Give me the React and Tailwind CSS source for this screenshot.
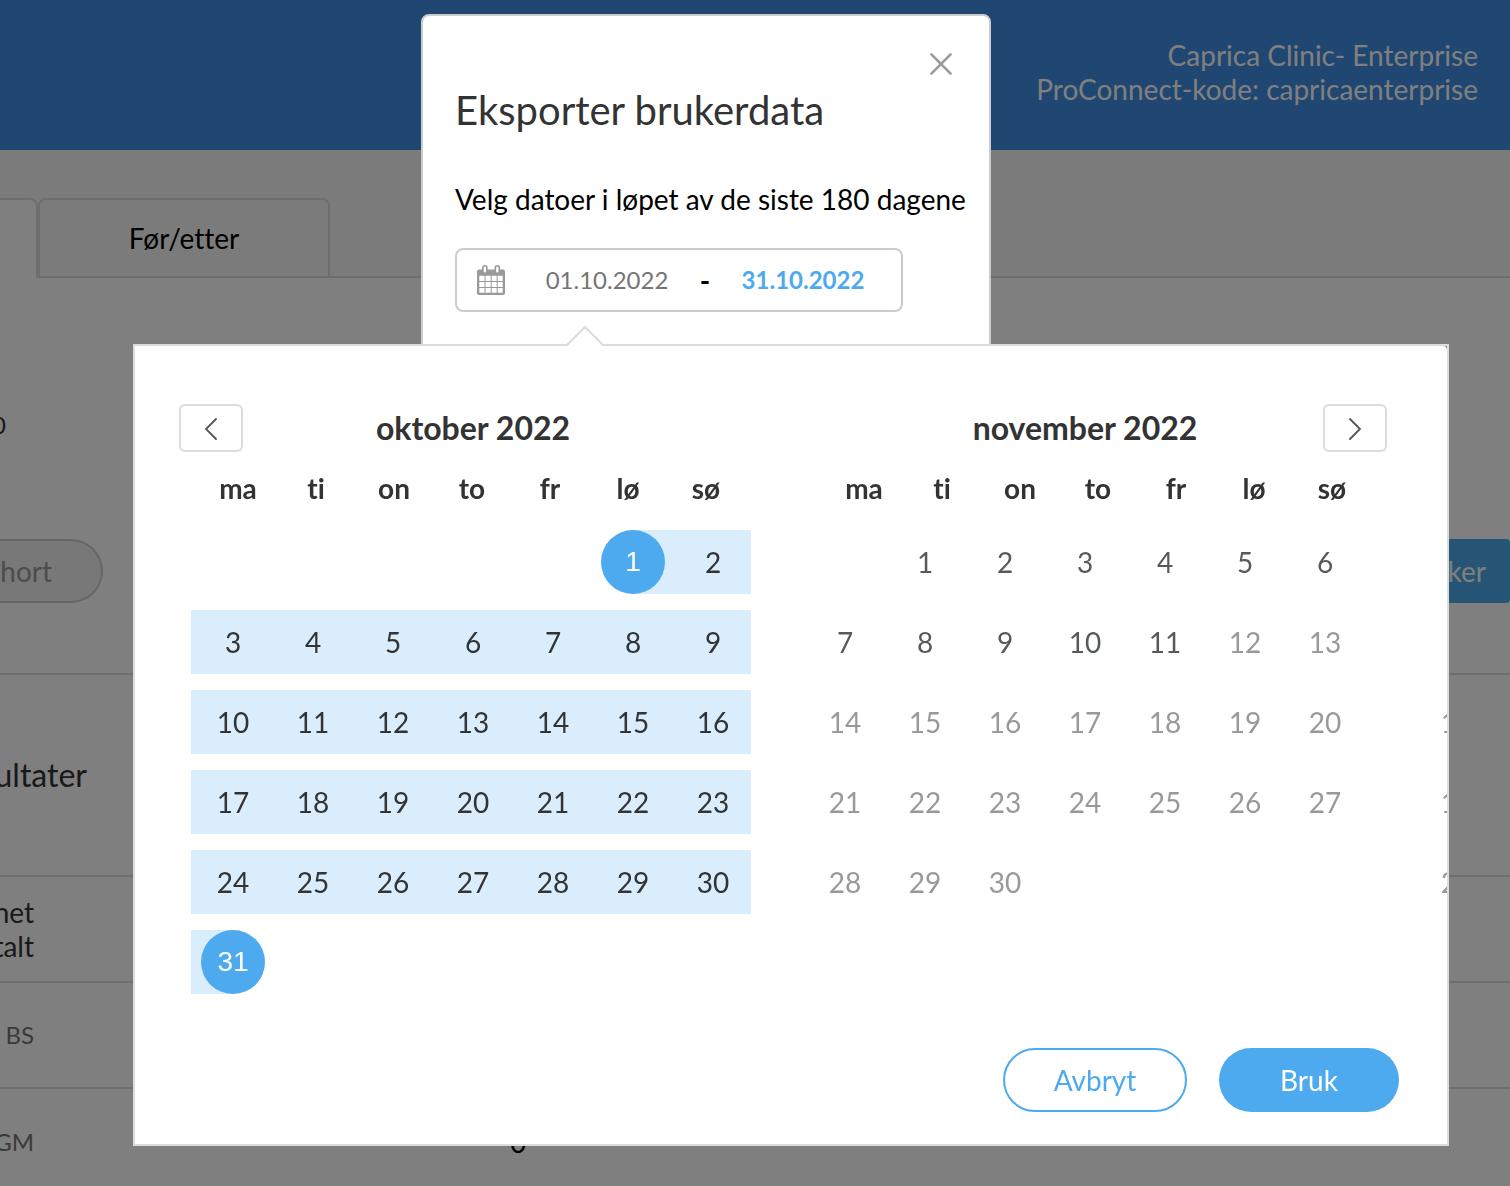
import { useState } from 'react';

const WEEKDAYS = ['ma', 'ti', 'on', 'to', 'fr', 'lø', 'sø'];

const MONTHS = [
  { id: 'oct', title: 'oktober 2022', offset: 5, days: 31, selected: true },
  { id: 'nov', title: 'november 2022', offset: 1, days: 30, lastAvailable: 11 },
];

const ROWS = [
  { name: 'BS', value: '' },
  { name: 'GM', value: '0' },
];

function getWeeks(offset, days) {
  const cells = [
    ...Array(offset).fill(null),
    ...Array.from({ length: days }, (_, i) => i + 1),
  ];
  while (cells.length % 7) cells.push(null);
  const weeks = [];
  for (let i = 0; i < cells.length; i += 7) weeks.push(cells.slice(i, i + 7));
  return weeks;
}

function CloseIcon() {
  return (
    <svg width="24" height="24" viewBox="0 0 24 24" fill="none" stroke="#999" strokeWidth="2.6" strokeLinecap="round">
      <path d="M2.4 2.4 21.6 21.6M21.6 2.4 2.4 21.6" />
    </svg>
  );
}

function CalendarIcon() {
  return (
    <svg width="28" height="30" viewBox="0 0 28 30" className="shrink-0" aria-hidden="true">
      <rect x="0" y="4.5" width="28" height="25.5" rx="2" fill="#999" />
      <path
        fill="#fff"
        d="M2.3 10.7h5.2V16H2.3zM8.5 10.7h5.2V16H8.5zM14.7 10.7h5V16h-5zM20.7 10.7h5V16h-5zM2.3 17h5.2v5H2.3zM8.5 17h5.2v5H8.5zM14.7 17h5v5h-5zM20.7 17h5v5h-5zM2.3 23h5.2v4.7H2.3zM8.5 23h5.2v4.7H8.5zM14.7 23h5v4.7h-5zM20.7 23h5v4.7h-5z"
      />
      <rect x="5.9" y="0.8" width="4" height="7.4" rx="2" fill="#fff" stroke="#999" strokeWidth="1.6" />
      <rect x="18.3" y="0.8" width="4" height="7.4" rx="2" fill="#fff" stroke="#999" strokeWidth="1.6" />
    </svg>
  );
}

function NavButton({ label, path }) {
  return (
    <button
      type="button"
      aria-label={label}
      className="flex h-12 w-16 shrink-0 items-center justify-center rounded-md border-2 border-[#dcdcdc] bg-white"
    >
      <svg width="24" height="24" viewBox="0 0 24 24" fill="none" stroke="#555" strokeWidth="1.8" strokeLinecap="round">
        <path d={path} />
      </svg>
    </button>
  );
}

function Day({ day, month }) {
  if (!day) return <td className="h-16 w-20 p-0" />;

  const isStart = month.selected && day === 1;
  const isEnd = month.selected && day === month.days;
  const disabled = month.lastAvailable && day > month.lastAvailable;

  let band = '';
  if (isStart) band = 'bg-[linear-gradient(to_right,transparent_50%,#daedfc_50%)]';
  else if (isEnd) band = 'bg-[linear-gradient(to_right,#daedfc_50%,transparent_50%)]';
  else if (month.selected) band = 'bg-[#daedfc]';

  let tone = 'text-[#333]';
  if (isStart || isEnd) tone = 'bg-[#4daaee] font-["Liberation_Sans",sans-serif] text-white';
  else if (disabled) tone = 'text-[#999]';
  else if (!month.selected) tone = 'text-[#565a5c]';

  return (
    <td className={`h-16 w-20 p-0 ${band}`}>
      <button type="button" disabled={disabled} className={`ml-[10px] block size-16 rounded-full text-[28px] ${tone}`}>
        {day}
      </button>
    </td>
  );
}

function Month({ month }) {
  return (
    <table aria-labelledby={month.id} className="shrink-0 border-separate border-spacing-x-0 border-spacing-y-4">
      <tbody>
        {getWeeks(month.offset, month.days).map((week, i) => (
          <tr key={i}>
            {week.map((day, j) => <Day key={j} day={day} month={month} />)}
          </tr>
        ))}
      </tbody>
    </table>
  );
}

function Weekdays() {
  return (
    <ul className="flex shrink-0">
      {WEEKDAYS.map((name) => (
        <li key={name} className="w-[78px] text-center text-[28px] leading-9 font-bold text-[#333]">{name}</li>
      ))}
    </ul>
  );
}

function DateRangePicker() {
  return (
    <div className="absolute top-[328px] -left-[290px] w-[1316px] border-2 border-[#dcdcdc]">
      <svg width="40" height="22" viewBox="0 0 40 22" className="absolute -top-[21px] left-[430px]" aria-hidden="true">
        <path d="M1 22 20 2l19 20z" fill="#fff" />
        <path d="M2 20 20 2l18 18" fill="none" stroke="#dcdcdc" strokeWidth="2" />
      </svg>

      <div className="overflow-hidden rounded-tr bg-white pt-[58px] pb-8">
        <div className="flex items-center pr-[60px] pl-11">
          <NavButton label="Forrige måned" path="M17 3 7 13l10 10" />
          <h2 id="oct" className="w-[460px] text-center text-[32px] leading-10 font-bold text-[#333]">{MONTHS[0].title}</h2>
          <h2 id="nov" className="mr-2 ml-auto w-[460px] text-center text-[32px] leading-10 font-bold text-[#333]">{MONTHS[1].title}</h2>
          <NavButton label="Neste måned" path="m7 3 10 10L7 23" />
        </div>

        <div className="mt-[18px] flex gap-20 pl-16">
          <Weekdays />
          <Weekdays />
        </div>

        <div className="mt-2 flex items-start gap-[52px] pl-14">
          {MONTHS.map((month) => <Month key={month.id} month={month} />)}
          {/* first column of the following month, cut by the panel edge */}
          <ul className="shrink-0 pt-[176px] text-[28px] text-[#999]" aria-hidden="true">
            {[12, 19, 26].map((day) => (
              <li key={day} className="mb-4 ml-[10px] flex size-16 items-center justify-center">{day}</li>
            ))}
          </ul>
        </div>

        <div className="mt-[38px] flex justify-end gap-8 pr-12 text-[28px]">
          <button type="button" className="h-16 w-[184px] rounded-full border-2 border-[#4daaee] bg-white text-[#4daaee]">Avbryt</button>
          <button type="button" className="h-16 w-[180px] rounded-full bg-[#4daaee] text-white">Bruk</button>
        </div>
      </div>
    </div>
  );
}

function ExportModal() {
  const [start, setStart] = useState('01.10.2022');
  const [end, setEnd] = useState('31.10.2022');

  return (
    <div role="dialog" aria-labelledby="export-title" className="relative h-[600px] w-[570px] shrink-0 rounded-lg border-2 border-[#ccc] bg-white px-8 pt-9">
      <div className="flex justify-end pr-1">
        <button type="button" aria-label="Lukk"><CloseIcon /></button>
      </div>
      <h1 id="export-title" className="mt-[10px] text-[40px] leading-[48px] text-[#333]">Eksporter brukerdata</h1>
      <p className="mt-[47px] text-[28px] leading-9 whitespace-nowrap text-black">Velg datoer i løpet av de siste 180 dagene</p>

      <div className="mt-[31px] flex h-16 w-[448px] items-center rounded-lg border-2 border-[#ccc] bg-white pl-5">
        <CalendarIcon />
        <input
          aria-label="Startdato"
          value={start}
          onChange={(e) => setStart(e.target.value)}
          className="ml-[22px] w-40 text-center text-[24px] text-[#757575] outline-none"
        />
        <span className="w-9 text-center text-[28px] font-bold text-black">-</span>
        <input
          aria-label="Sluttdato"
          value={end}
          onChange={(e) => setEnd(e.target.value)}
          className="w-40 text-center text-[24px] font-bold text-[#4daaee] outline-none"
        />
      </div>

      <DateRangePicker />
    </div>
  );
}

function ResultsPage() {
  return (
    <div className="text-[28px]">
      <header className="h-[150px] bg-[#408ce4] px-8 pt-[38px] text-right leading-[34px] text-white">
        <p>Caprica Clinic- Enterprise</p>
        <p>ProConnect-kode: capricaenterprise</p>
      </header>

      <nav className="flex h-32 items-stretch bg-[#f7f7f7] pt-12">
        <div className="w-[38px] rounded-tr-lg border-t-2 border-r-2 border-[#dcdcdc] bg-white" />
        <a href="#for-etter" className="flex w-[292px] items-center justify-center rounded-t-lg border-2 border-[#dcdcdc] text-black">
          Før/etter
        </a>
        <div className="flex-1 border-b-2 border-[#dcdcdc]" />
      </nav>

      <div className="border-b-2 border-[#dcdcdc] pt-[129px] pb-[70px]">
        <div className="flex w-[6px] justify-end text-[24px] leading-9 text-[#333]">
          <span>0</span>
        </div>
        <div className="mt-24 flex justify-between">
          <button type="button" className="flex h-16 w-[103px] items-center justify-end rounded-r-full border-2 border-l-0 border-[#ccc] bg-[#f0f0f0] pr-[49px] text-[#999]">
            hort
          </button>
          <button type="button" className="h-16 w-[180px] rounded-r-sm bg-[#4eaaec] pr-6 text-right text-white">ker</button>
        </div>
      </div>

      <div className="flex h-[200px] items-center">
        <h2 className="flex w-[87px] justify-end text-[32px] leading-10 text-[#333]">ultater</h2>
      </div>

      <table className="w-full table-fixed border-collapse">
        <thead>
          <tr className="h-[106px] border-t-2 border-[#dcdcdc]">
            <th className="w-[34px] p-0 font-normal text-[#333]">
              <div className="flex flex-col items-end leading-[34px]">
                <span>net</span>
                <span>talt</span>
              </div>
            </th>
            <th className="w-[968px] p-0" />
            <th className="p-0" />
          </tr>
        </thead>
        <tbody>
          {ROWS.map((row) => (
            <tr key={row.name} className="h-[106px] border-t-2 border-[#dcdcdc]">
              <th scope="row" className="p-0 text-[24px] font-normal text-[#757575]">
                <div className="flex justify-end">{row.name}</div>
              </th>
              <td className="p-0 text-center text-black">{row.value}</td>
              <td className="p-0" />
            </tr>
          ))}
        </tbody>
      </table>
    </div>
  );
}

export default function App() {
  return (
    <div className='h-screen overflow-hidden bg-white font-["Lato",sans-serif] [font-variant-ligatures:none]'>
      <ResultsPage />
      <div className="fixed inset-0 flex items-start justify-center overflow-hidden bg-black/50 pt-[14px] pr-[98px]">
        <ExportModal />
      </div>
    </div>
  );
}
